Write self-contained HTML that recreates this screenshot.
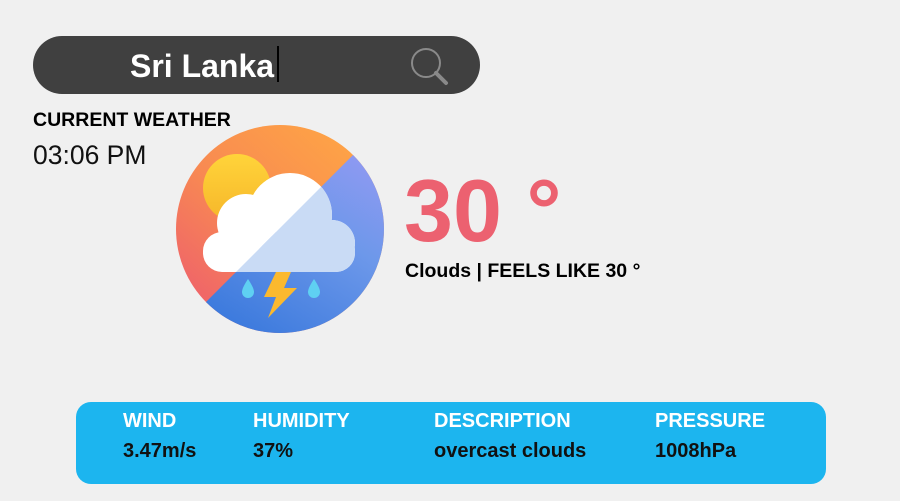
<!DOCTYPE html>
<html><head><meta charset="utf-8"><style>
*{margin:0;padding:0;box-sizing:border-box}
body{width:900px;height:501px;background:#f0f0f0;font-family:"Liberation Sans",sans-serif;position:relative;overflow:hidden}
.search{position:absolute;left:33px;top:36px;width:447px;height:58px;background:#404040;border-radius:29px}
.search .t{position:absolute;left:97px;top:12px;font-size:32px;font-weight:bold;color:#fff}
.cur{position:absolute;left:244px;top:10px;width:2px;height:36px;background:#000}
.cw{position:absolute;left:33px;top:109px;font-size:19.5px;font-weight:bold;color:#000}
.tm{position:absolute;left:33px;top:140px;font-size:26.5px;color:#111}
.temp{position:absolute;left:404px;top:167px;font-size:88px;font-weight:bold;color:#ec6170;line-height:1}
.feel{position:absolute;left:405px;top:260px;font-size:19.5px;font-weight:bold;color:#000}
.bar{position:absolute;left:76px;top:402px;width:750px;height:82px;background:#1cb5ef;border-radius:15px}
.c{position:absolute;font-size:20px;font-weight:bold}
.h{top:8px;color:#fff}.v{top:38px;color:#111}
</style></head><body>
<div class="search"><div class="t">Sri Lanka</div><div class="cur"></div>
<svg style="position:absolute;left:0;top:0" width="447" height="58"><circle cx="393" cy="27" r="14" fill="none" stroke="#8a8a8a" stroke-width="2"/><line x1="403" y1="37" x2="413" y2="47" stroke="#8a8a8a" stroke-width="4" stroke-linecap="round"/></svg>
</div>
<div class="cw">CURRENT WEATHER</div>
<div class="tm">03:06 PM</div>
<svg style="position:absolute;left:0;top:0" width="900" height="501">
<defs>
<linearGradient id="o" x1="0.7" y1="0" x2="0" y2="0.8"><stop offset="0" stop-color="#fea346"/><stop offset="0.5" stop-color="#f88a52"/><stop offset="1" stop-color="#ee5f6c"/></linearGradient>
<linearGradient id="b" x1="1" y1="0" x2="0.4" y2="1"><stop offset="0" stop-color="#a19af6"/><stop offset="0.5" stop-color="#6d98ea"/><stop offset="1" stop-color="#3c7add"/></linearGradient>
<linearGradient id="s" x1="0" y1="0" x2="0" y2="1"><stop offset="0" stop-color="#ffd43a"/><stop offset="1" stop-color="#f6b62a"/></linearGradient>
<clipPath id="circ"><circle cx="280" cy="229" r="104"/></clipPath>
<clipPath id="br"><polygon points="508,0 900,0 900,501 7,501"/></clipPath>
<g id="cloud"><rect x="203" y="232" width="152" height="40" rx="19"/><circle cx="290" cy="215" r="42"/><circle cx="246" cy="223" r="29"/><circle cx="332" cy="243" r="23"/></g>
</defs>
<g clip-path="url(#circ)">
<rect x="170" y="120" width="220" height="220" fill="url(#o)"/>
<rect x="170" y="120" width="220" height="220" fill="url(#b)" clip-path="url(#br)"/>
</g>
<circle cx="237" cy="188" r="34" fill="url(#s)"/>
<use href="#cloud" fill="#fff"/>
<use href="#cloud" fill="#c9dbf5" clip-path="url(#br)"/>
<path d="M248 279 Q242 288 242 292 A6 6 0 0 0 254 292 Q254 288 248 279Z" fill="#5fd0f2"/>
<path d="M314 279 Q308 288 308 292 A6 6 0 0 0 320 292 Q320 288 314 279Z" fill="#5fd0f2"/>
<polygon points="276,272 291,272 284,288 297,288 268,318 276,297 264,297" fill="#fbb92e"/>
</svg>
<div class="temp">30 °</div>
<div class="feel">Clouds | FEELS LIKE 30 °</div>
<div class="bar">
<div class="c h" style="left:47px">WIND</div><div class="c v" style="left:47px">3.47m/s</div>
<div class="c h" style="left:177px">HUMIDITY</div><div class="c v" style="left:177px">37%</div>
<div class="c h" style="left:358px">DESCRIPTION</div><div class="c v" style="left:358px">overcast clouds</div>
<div class="c h" style="left:579px">PRESSURE</div><div class="c v" style="left:579px">1008hPa</div>
</div>
</body></html>
